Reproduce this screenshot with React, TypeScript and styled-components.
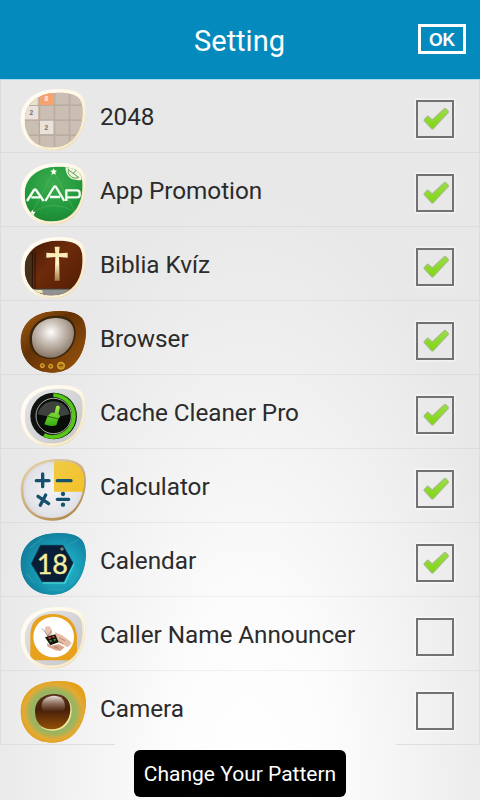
import { ReactNode, useState } from "react";
import styled, { createGlobalStyle } from "styled-components";

const GlobalStyle = createGlobalStyle`
  * { box-sizing: border-box; }
  body {
    margin: 0;
    font-family: Roboto, "Noto Sans", sans-serif;
  }
`;

const Screen = styled.main`
  width: 480px;
  height: 800px;
  overflow: hidden;
  display: flex;
  flex-direction: column;
  background: radial-gradient(ellipse 270px 600px at 52% 100%, #fff 0%, #fcfcfc 32%, #f2f2f2 65%, #e8e8e8 100%);
`;

const Header = styled.header`
  flex: none;
  display: grid;
  grid-template-columns: 1fr auto 1fr;
  align-items: center;
  height: 79px;
  padding: 0 14px 0 13px;
  background: #058abd;
`;

const Title = styled.h1`
  grid-column: 2;
  margin: 3px 0 0;
  color: #fff;
  font-size: 29px;
  font-weight: 400;
  line-height: 36px;
`;

const OkButton = styled.button`
  justify-self: end;
  width: 48px;
  height: 30px;
  margin-bottom: 1px;
  padding: 1px 0 0;
  border: 3px solid #fff;
  background: transparent;
  color: #fff;
  font: bold 17.5px/22px "Liberation Sans", Arial, sans-serif;
`;

const List = styled.ul`
  flex: none;
  margin: 0;
  padding: 0;
  list-style: none;
  border: solid rgba(0, 0, 0, 0.05);
  border-width: 0 1px;
  box-shadow: inset 0 1px 0 #a9dcee;
`;

const Row = styled.li`
  display: flex;
  align-items: center;
  height: 74px;
  padding: 0 25px 0 18px;
  border-bottom: 1px solid rgba(0, 0, 0, 0.05);

  &:last-child {
    border-image: linear-gradient(90deg, #dedede 0 24%, transparent 24% 82.5%, #dedede 82.5%) 1;
  }
`;

const Icon = styled.svg`
  flex: none;
  width: 68px;
  height: 66px;
  margin-top: 7px;
`;

const Label = styled.span`
  flex: 1;
  padding: 2px 0 0 13px;
  color: #2b2b2b;
  font-size: 24.3px;
  line-height: 30px;
  letter-spacing: -0.04px;
`;

const Box = styled.button`
  flex: none;
  display: flex;
  align-items: center;
  justify-content: center;
  width: 38px;
  height: 38px;
  margin-top: 7px;
  padding: 0 0 1px;
  border: 2px solid #727272;
  background: transparent;
  box-shadow: 0 0 2px 1px rgba(255, 255, 255, 0.7);
`;

const Footer = styled.footer`
  display: flex;
  justify-content: center;
  padding-top: 5px;
`;

const PatternButton = styled.button`
  width: 212px;
  height: 47px;
  padding: 0;
  border: 0;
  border-radius: 6px;
  background: #000;
  color: #fff;
  font: 21px/28px Roboto, sans-serif;
  white-space: nowrap;
`;

const OUTER = "M143 25C180 24 208 33 218 49C231 70 230 105 221 134C209 175 178 211 127 210C70 210 33 172 32 118C32 60 75 26 143 25Z";
const INNER = "M140 36C175 35 201 42 210 57C221 77 219 108 212 134C201 171 173 200 129 200C76 201 45 168 44 120C44 68 84 37 140 36Z";

function Badge({ id, rim = "url(#cream)", clip = INNER, children }: { id: string; rim?: string; clip?: string; children: ReactNode }) {
  return (
    <Icon viewBox="27 16 204 198">
      <defs>
        <clipPath id={id}><path d={clip} /></clipPath>
        <linearGradient id="cream" x1="0" y1="0" x2="1" y2="1">
          <stop offset="0" stopColor="#fffdf6" />
          <stop offset=".5" stopColor="#fff8e6" />
          <stop offset="1" stopColor="#e6cf9b" />
        </linearGradient>
        <linearGradient id="silver" x1="0" y1="0" x2="1" y2="1">
          <stop offset="0" stopColor="#e9e9ea" />
          <stop offset="1" stopColor="#c2c3c8" />
        </linearGradient>
      </defs>
      <path d={OUTER} fill={rim} />
      {rim === "url(#cream)" && (
        <path d="M218 58C228 82 224 120 210 153C190 191 158 207 112 204" fill="none" stroke="#fff6e0" strokeWidth="3" />
      )}
      <g clipPath={`url(#${id})`}>{children}</g>
    </Icon>
  );
}

const Tiles = () => (
  <Badge id="tiles">
    <path d="M27 18h204v198H27z" fill="#b9ada1" />
    {[0, 1, 2, 3].map((r) =>
      [0, 1, 2, 3].map((c) => (
        <rect key={`${r}${c}`} x={46 + c * 45} y={31 + r * 45} width="40" height="40" fill="#cbbfb3" />
      ))
    )}
    <path d="M41 31h42v42H41z" fill="#eae1c9" />
    <path d="M90 28h41v45H90z" fill="#f5a270" />
    <path d="M42 76h42v40H42zM90 120h40v40H90z" fill="#eae2da" />
    <g fontFamily="Liberation Sans" fontWeight="700" fontSize="20" textAnchor="middle">
      <text x="109" y="60" fill="#fff1e5">8</text>
      <text x="64" y="103" fill="#756c64">2</text>
      <text x="109" y="147" fill="#756c64">2</text>
    </g>
  </Badge>
);

const Promotion = () => (
  <Badge id="promo">
    <radialGradient id="green" cx=".5" cy=".35" r=".7">
      <stop offset="0" stopColor="#3dad4e" />
      <stop offset=".55" stopColor="#239a3e" />
      <stop offset="1" stopColor="#197e2d" />
    </radialGradient>
    <path d="M27 18h204v198H27z" fill="url(#green)" />
    <path d="M131 50L66 174M131 50L197 174M66 174Q130 130 197 174" fill="none" stroke="#77c47e" strokeWidth="1.4" opacity=".7" />
    <path d="M167 28C163 62 180 80 214 76L224 42L190 24Z" fill="#f1f5df" />
    <path d="M176 42C170 58 184 75 206 69M176 46L206 68M190 56L202 42M196 39L206 43" fill="none" stroke="#5a9b51" strokeWidth="3" />
    <path d="M131 41l3 6 7 1-5 5 1 7-6-3-6 3 1-7-5-5 7-1zM67 165l3 6 7 1-5 5 1 7-6-3-6 3 1-7-5-5 7-1zM194 170l2 4 5 1-4 4 1 5-4-3-5 3 1-5-3-4 5-1z" fill="#f4fbe9" />
    <g fill="none" stroke="#f7fff5" strokeWidth="7" strokeLinejoin="round">
      <path d="M51 139L72 106Q75 102 78 106L101 139M64 128H90" />
      <path d="M106 139L132 97Q135 93 138 97L163 139M120 127H150" />
      <path d="M169 139V107H201Q209 107 209 115V120Q209 128 201 128H169" />
    </g>
  </Badge>
);

const Bible = () => (
  <Badge id="bible">
    <linearGradient id="leather" x1="0" y1="0" x2="1" y2="1">
      <stop offset="0" stopColor="#351405" />
      <stop offset=".45" stopColor="#6d2b0b" />
      <stop offset="1" stopColor="#4c1903" />
    </linearGradient>
    <linearGradient id="gold" x1="0" y1="0" x2="0" y2="1">
      <stop offset="0" stopColor="#f7e6a5" />
      <stop offset=".5" stopColor="#fff5cd" />
      <stop offset="1" stopColor="#a47d40" />
    </linearGradient>
    <path d="M27 18h204v198H27z" fill="url(#leather)" />
    <path d="M42 80h25v106H42z" fill="#47301b" />
    <path d="M67 70v114M75 66v118" stroke="#291205" strokeWidth="3" />
    <path d="M72 181H214V216H72z" fill="#8f9290" />
    <path d="M78 181H209" stroke="#493d31" strokeWidth="3" />
    <path d="M65 184L96 184L99 193L78 192L82 199Z" fill="#f1e6b0" />
    <path d="M134 54h15l-2 20 26-2v15l-26-2 2 71h-15l2-71-27 2V72l27 2z" fill="url(#gold)" />
  </Badge>
);

const Television = () => (
  <Badge id="tv" rim="url(#wood)" clip={OUTER}>
    <linearGradient id="wood" x1="0" y1="0" x2="1" y2="1">
      <stop offset="0" stopColor="#a65e12" />
      <stop offset=".4" stopColor="#643205" />
      <stop offset="1" stopColor="#9d5610" />
    </linearGradient>
    <radialGradient id="glass" cx=".45" cy=".36" r=".62">
      <stop offset="0" stopColor="#fff" />
      <stop offset=".35" stopColor="#d5ccc5" />
      <stop offset="1" stopColor="#8c7968" />
    </radialGradient>
    <path d={OUTER} fill="url(#wood)" />
    <path d="M135 39C174 38 196 54 197 88C198 133 162 169 122 169C83 169 59 146 58 110C57 67 96 40 135 39Z" fill="#3a260d" />
    <path d="M135 46C169 45 191 59 192 88C193 130 160 165 122 165C86 165 66 143 66 110C66 70 98 47 135 46Z" fill="url(#glass)" />
    <g fill="#bc8417" stroke="#e2b137" strokeWidth="3">
      <circle cx="97" cy="189" r="6" />
      <circle cx="122" cy="191" r="6" />
      <circle cx="153" cy="189" r="10.5" />
    </g>
    <path d="M94 188h6M119 190h6M147 188h12" stroke="#70470a" strokeWidth="3" />
  </Badge>
);

const Cleaner = () => (
  <Badge id="cleaner">
    <linearGradient id="brush" x1="0" y1="0" x2="0" y2="1">
      <stop offset="0" stopColor="#a5ef44" />
      <stop offset="1" stopColor="#34ae13" />
    </linearGradient>
    <path d="M27 18h204v198H27z" fill="url(#silver)" />
    <circle cx="131" cy="118" r="70" fill="#101310" />
    <path d="M130 55A63 63 0 1 1 102 175" fill="none" stroke="#58c718" strokeWidth="12" />
    <path d="M130 50A68 68 0 0 1 198 118" fill="none" stroke="#248510" strokeWidth="3" />
    <circle cx="131" cy="118" r="53" fill="#080d08" stroke="#cdcdcd" strokeWidth="2.5" />
    <path d="M83 113A49 49 0 0 1 179 113Q134 127 83 113Z" fill="#3d423e" />
    <path d="M103 143L113 118L124 108L134 108L138 90Q144 82 150 91L145 111L151 119L145 126L139 146Q121 151 103 143Z" fill="url(#brush)" />
    <path d="M113 119L145 127" stroke="#2b710e" strokeWidth="3" />
  </Badge>
);

const Calculator = () => (
  <Badge id="calc" rim="url(#bronze)" clip="M142 32C179 31 204 40 213 56C225 77 223 106 216 132C204 171 175 202 128 202C74 203 41 170 40 118C40 66 82 33 142 32Z">
    <linearGradient id="bronze" x1="0" y1="0" x2=".7" y2="1">
      <stop offset="0" stopColor="#ead9b2" />
      <stop offset="1" stopColor="#b48a4f" />
    </linearGradient>
    <radialGradient id="pearl" cx=".5" cy=".5" r=".55">
      <stop offset="0" stopColor="#f3f3f6" />
      <stop offset=".7" stopColor="#e2e3e8" />
      <stop offset="1" stopColor="#c9c8cc" />
    </radialGradient>
    <linearGradient id="sun" x1="0" y1="0" x2="1" y2="1">
      <stop offset="0" stopColor="#f0cb48" />
      <stop offset="1" stopColor="#f3c126" />
    </linearGradient>
    <path d="M27 18h204v198H27z" fill="url(#pearl)" />
    <path d="M132 18H231V123H132z" fill="url(#sun)" />
    <g stroke="#15516f" strokeWidth="10" strokeLinecap="round">
      <path d="M79 90h38M98 70v38M142 90h41M142 146h34M84 137l32 22M107 133l-16 31" />
    </g>
    <circle cx="159" cy="130" r="6.5" fill="#15516f" />
    <circle cx="159" cy="162" r="6.5" fill="#15516f" />
  </Badge>
);

const Calendar = () => (
  <Badge id="calendar" rim="#178fa7" clip={OUTER}>
    <radialGradient id="teal" cx=".58" cy=".55" r=".58">
      <stop offset="0" stopColor="#29c9d7" />
      <stop offset=".7" stopColor="#1794af" />
      <stop offset="1" stopColor="#147e9c" />
    </radialGradient>
    <path d={OUTER} fill="url(#teal)" />
    <path d="M60 70L99 39M181 56l27-12M50 148l24 27M180 182l26-38M113 193l50 3" stroke="#39a8bc" strokeWidth="4" opacity=".45" />
    <path d="M98 174H164L191 116" fill="none" stroke="#4ce1df" strokeWidth="5" />
    <path d="M91 61H159L190 115L162 172H96L63 117Z" fill="#091d36" stroke="#126b82" strokeWidth="2" />
    <text x="127" y="147" textAnchor="middle" fontFamily="Lato" fontSize="81" fill="#f4efa0" stroke="#f4efa0" strokeWidth="1">18</text>
    <path d="M156 67v12M150 73h12" stroke="#d6d7a0" strokeWidth="2" />
  </Badge>
);

const Announcer = () => (
  <Badge id="announcer">
    <path d="M27 18h204v198H27z" fill="url(#silver)" />
    <path d="M61 185V105Q65 46 131 46Q195 49 201 112V168Q201 185 183 185Z" fill="#e8a11b" />
    <circle cx="131" cy="115" r="61" fill="#fff" />
    <path d="M106 84l12-2 8 11 1 17-15 4-8-17z" fill="#e9c3b1" />
    <path d="M96 89l19 23M124 97l-12 17" stroke="#5d4944" strokeWidth="1.5" />
    <path d="M135 101L156 110L178 126L185 133L173 146L145 131L139 116Z" fill="#e5bba4" />
    <path d="M110 133L123 141L146 137L164 146L151 157L137 155L113 144Z" fill="#d9a58c" />
    <path d="M105 116l31-9 10 24-25 9z" fill="#17130d" />
    <path d="M116 119l6-2M127 115l6-1" stroke="#e74d39" strokeWidth="5" />
    <path d="M119 128l6-2M131 124l6-1" stroke="#46a34c" strokeWidth="5" />
    <path d="M148 118l17 8M144 127l15 8M132 144l14 5" stroke="#a96e58" strokeWidth="2" />
  </Badge>
);

const Camera = () => (
  <Badge id="camera" rim="url(#amber)" clip={OUTER}>
    <radialGradient id="amber" cx=".5" cy=".5" r=".53">
      <stop offset=".3" stopColor="#8eb568" />
      <stop offset=".66" stopColor="#9bb460" />
      <stop offset=".84" stopColor="#e2aa34" />
      <stop offset="1" stopColor="#e4a01b" />
    </radialGradient>
    <linearGradient id="lens" x1="0" y1="0" x2="0" y2="1">
      <stop offset="0" stopColor="#57301a" />
      <stop offset=".45" stopColor="#48200a" />
      <stop offset="1" stopColor="#945006" />
    </linearGradient>
    <linearGradient id="shine" x1="0" y1="0" x2="0" y2="1">
      <stop offset="0" stopColor="#eee4df" />
      <stop offset="1" stopColor="#9a7964" stopOpacity=".15" />
    </linearGradient>
    <path d={OUTER} fill="url(#amber)" />
    <path d="M133 66C164 65 185 80 185 112C185 150 160 175 127 174C93 174 77 152 77 118C77 86 102 67 133 66Z" fill="#efe998" />
    <path d="M130 64C160 63 181 77 181 109C181 146 156 170 125 170C92 170 75 149 75 115C75 83 100 65 130 64Z" fill="url(#lens)" />
    <path d="M130 69Q155 68 163 87Q169 113 156 114H101Q91 108 97 88Q105 71 130 69Z" fill="url(#shine)" />
  </Badge>
);

const Check = () => (
  <svg width="30" height="26" viewBox="0.5 0.5 27 23">
    <linearGradient id="lime" x1="0" y1="0" x2="0" y2="1">
      <stop offset="0" stopColor="#9adf45" />
      <stop offset="1" stopColor="#80d510" />
    </linearGradient>
    <path d="M4.3 12.5L7 9.6Q7.5 9.2 8 9.6L11.5 12.8L22.4 2.6Q23 2 23.6 2.6L25.8 5Q26.3 5.6 25.8 6.2L12.3 20.8Q11.6 21.3 11 20.8L4.3 13.4Q3.9 13 4.3 12.5Z" fill="url(#lime)" stroke="#a5bd88" strokeWidth="1" />
  </svg>
);

const apps = [
  { name: "2048", icon: Tiles, locked: true },
  { name: "App Promotion", icon: Promotion, locked: true },
  { name: "Biblia Kvíz", icon: Bible, locked: true },
  { name: "Browser", icon: Television, locked: true },
  { name: "Cache Cleaner Pro", icon: Cleaner, locked: true },
  { name: "Calculator", icon: Calculator, locked: true },
  { name: "Calendar", icon: Calendar, locked: true },
  { name: "Caller Name Announcer", icon: Announcer, locked: false },
  { name: "Camera", icon: Camera, locked: false },
];

export default function App() {
  const [locked, setLocked] = useState(apps.map((a) => a.locked));

  const toggle = (i: number) => setLocked(locked.map((v, n) => (n === i ? !v : v)));

  return (
    <Screen>
      <GlobalStyle />
      <Header>
        <Title>Setting</Title>
        <OkButton>OK</OkButton>
      </Header>
      <List>
        {apps.map(({ name, icon: AppIcon }, i) => (
          <Row key={name}>
            <AppIcon />
            <Label>{name}</Label>
            <Box role="checkbox" aria-checked={locked[i]} aria-label={name} onClick={() => toggle(i)}>
              {locked[i] && <Check />}
            </Box>
          </Row>
        ))}
      </List>
      <Footer>
        <PatternButton>Change Your Pattern</PatternButton>
      </Footer>
    </Screen>
  );
}
